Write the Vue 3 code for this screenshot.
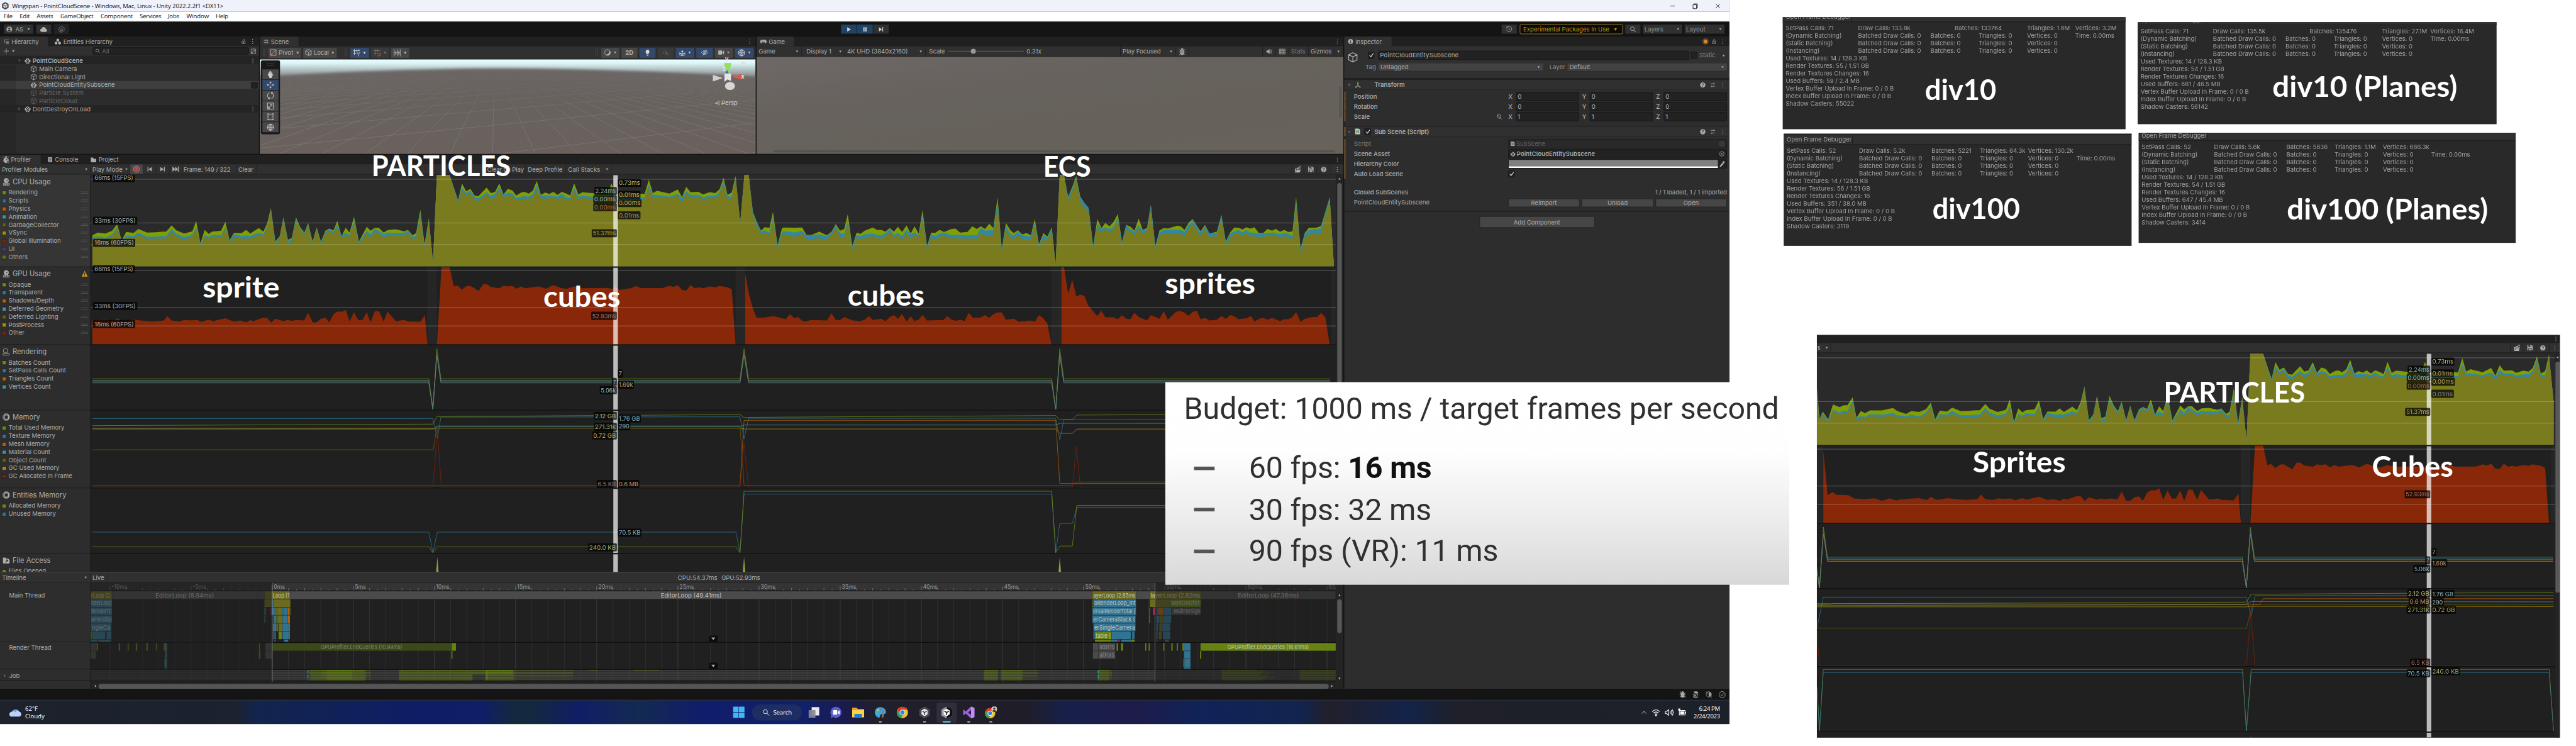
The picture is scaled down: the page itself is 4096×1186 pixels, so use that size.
<script setup>
import { h } from 'vue'

/* ---------- text fitting ---------- */
const fit = (el, { value }) => {
  const n = el.textContent.length
  if (!value || !n) return
  el.style.letterSpacing = '0px'
  el.style.letterSpacing = (value - el.offsetWidth) / n + 'px'
}
const vFit = { mounted: fit }

/* ---------- icons (16 x 16 grid) ---------- */
const S = 'fill="none" stroke="currentColor" stroke-width="1.2"'
const icons = {
  down: '<path d="M4 5h8L8 12z"/>',
  up: '<path d="M4 11h8L8 4z"/>',
  left: '<path d="M11 3v10L5 8z"/>',
  right: '<path d="M5 3v10l6-5z"/>',
  dots: '<circle cx="8" cy="3" r="1.1"/><circle cx="8" cy="8" r="1.1"/><circle cx="8" cy="13" r="1.1"/>',
  lock: `<rect x="3.5" y="7.5" width="9" height="6.5" ${S}/><path d="M6 7V4.500a2.500 2.500 0 0 1 5 0V7" ${S}/><path d="M7 10h2v2H7z"/>`,
  list: `<path d="M2 3h12M6 7h8M6 10h8M6 13.500h8M3 3v8" ${S}/>`,
  trio: '<circle cx="8" cy="4.500" r="3.300"/><circle cx="4" cy="11" r="3.300"/><circle cx="12" cy="11" r="3.300"/>',
  plus: `<path d="M8 1.500v13M1.500 8h13" ${S}/>`,
  search: `<circle cx="6.500" cy="6.500" r="4" ${S}/><path d="M9.500 9.500L14 14" ${S}/>`,
  expand: `<path d="M2 2h12v12H2zM6 10l5-5M7 5h4v4" ${S}/><path d="M2 9h5v5H2z" opacity=".6"/>`,
  cube: `<path d="M8 1.300l6 3v7.400l-6 3-6-3V4.300zM2 4.300l6 3 6-3M8 7.300v7.400" ${S}/>`,
  unity: '<path d="M7.300 1v4L5 6.300 3.500 5.400zM8.700 1v4L11 6.300l1.500-.9zM1.500 5l4.500 2.700v3L4 12 1.500 10zM14.500 5L10 7.700v3l2 1.300 2.500-2zM7.300 9.300v6L3.500 13l2.600-1.500zM8.700 9.300v6l3.800-2.300-2.600-1.500z"/><path d="M8 5.600l2 1.100-2 1.200-2-1.200z"/>',
  grid: `<path d="M5 1v14M11 1v14M1 5h14M1 11h14" ${S}/>`,
  user: `<circle cx="8" cy="8" r="7"/><circle cx="8" cy="6" r="2.400" fill="#303030"/><path d="M3.500 12c1-3 8-3 9 0a7 7 0 0 1-9 0z" fill="#303030"/>`,
  cloud: '<path d="M4 13.500a3.400 3.400 0 0 1-.4-6.700 4.500 4.500 0 0 1 8.700.6 3.100 3.100 0 0 1-.3 6.100z"/>',
  vcs: `<path d="M8 1.500l5.500 3v6L10 12.500V8a2 2 0 1 0-4 0v6.500L2.500 11V4.500z" ${S}/><path d="M8 8v7" ${S}/>`,
  history: `<path d="M3 4a6 6 0 1 1-1 5M2.500 1.500V5H6M8 4.500V8.500l2.500 1.500" ${S}/>`,
  play: '<path d="M4 2.500l9 5.500-9 5.500z"/>',
  pause: '<path d="M4 2.500h3v11H4zM9 2.500h3v11H9z"/>',
  step: '<path d="M3 2.500l7 5.500-7 5.500zM11 2.500h2v11h-2z"/>',
  prev: '<path d="M3 2.500h2.200v11H3zM13.500 2.500v11L6 8z"/>',
  next: '<path d="M11 2.500h2.200v11H11zM2.500 2.500v11L10 8z"/>',
  last: '<path d="M12.500 2.500h2v11h-2zM1 2.500v11L7 8zM7 2.500v11L12.500 8z"/>',
  record: '<circle cx="8" cy="8" r="6.700" fill="none" stroke="#aaa" stroke-width="1.100"/><circle cx="8" cy="8" r="4.600" fill="#d8403c"/>',
  orange: '<circle cx="8" cy="8" r="6.300" fill="none" stroke="#999" stroke-width="1.300"/><circle cx="8" cy="8" r="4" fill="#f08c1c"/>',
  pivot: `<path d="M2 2h12v12H2zM3 13L13 3" ${S}/><circle cx="4" cy="12.500" r="2.500" fill="none" stroke="#e0553a" stroke-width="1.300"/>`,
  local: `<path d="M8 1.300l6 3v7l-6 3-6-3v-7zM2 4.300l6 3 6-3M8 7.300v7" ${S}/><circle cx="12" cy="12" r="2.500" fill="none" stroke="#e0553a" stroke-width="1.300"/>`,
  gridy: `<path d="M4 1v11M9 1v5M1 4h14M1 9h7M13 1v3" ${S}/><path d="M9 7l3 4 2.500-4M12 11v4" ${S} />`,
  snap: `<path d="M4 1v12M9 1v6M1 4h14M1 9h7" ${S}/><path d="M9 9h3a2 2 0 0 1 0 5H9" fill="none" stroke="#b5482f" stroke-width="2"/>`,
  ruler: `<path d="M2 1v14M5 4v8M8 1v14M11 4v8M14 1v14M2 8h12" ${S}/>`,
  shade: `<circle cx="8" cy="8" r="6" ${S}/><path d="M12 3.500A6 6 0 0 1 4 12.600 8 8 0 0 0 12 3.500z"/>`,
  bulb: '<path d="M8 1a4.500 4.500 0 0 0-2.500 8.200V11h5V9.200A4.500 4.500 0 0 0 8 1zM6 12h4v2.500H6z"/>',
  mute: `<path d="M3 6v5M6 3v10M9 5v6" ${S}/><path d="M10 10l4 4M14 10l-4 4" ${S}/>`,
  fx: '<path d="M8 1l1.300 3L12 5l-2.700 1L8 9 6.700 6 4 5l2.700-1zM1 7l7 3 7-3v2l-7 3.500L1 9zM1 11l7 3 7-3v1.500L8 16l-7-3.500z"/>',
  eye: `<path d="M1.500 8c3-5 10-5 13 0-3 5-10 5-13 0zM13 2L4 14" ${S}/><circle cx="8" cy="8" r="2" ${S}/>`,
  camera: '<path d="M1 3h9v10H1zM11 6l4-3v10l-4-3z"/>',
  globe: `<circle cx="8" cy="8" r="6.300" ${S}/><path d="M8 1.700v12.600M1.700 8h12.600M8 1.700c-4 3-4 9.600 0 12.600M8 1.700c4 3 4 9.600 0 12.600" ${S}/>`,
  hand: '<path d="M4 8V4.500q.7-1 1.400 0V7l.3-4.800q.7-1 1.400 0L7.500 7l.4-5.500q.8-1 1.500 0V7l.7-4q.8-.8 1.400.1L11 8.500l1.500-1.300q1 0 .9.800L11 12.500 10 15H6l-.7-2.500L2.500 8.500q.2-1 1-.8z"/>',
  move: `<path d="M8 6V2M8 10v4M6 8H2M10 8h4" ${S}/><path d="M5.500 3.500L8 .8l2.500 2.700zM5.500 12.500L8 15.200l2.500-2.700zM3.500 5.500L.8 8l2.700 2.500zM12.500 5.500L15.200 8l-2.700 2.500z"/>`,
  rotate: `<path d="M6 2a6.500 6.500 0 0 0 0 12M10 14a6.500 6.500 0 0 0 0-12M3 14h3.500v-3M13 2H9.500v3" ${S}/>`,
  rect: `<path d="M5 3h6M5 13h6M3 5v6M13 5v6" ${S}/><path d="M2 1.500h2.500V4H2zM11.500 1.500H14V4h-2.500zM2 12h2.500v2.500H2zM11.500 12H14v2.500h-2.500z"/>`,
  pad: '<path d="M4 4h8a4 4 0 0 1 3.500 6q-1 3.500-3.500 1.500L10.500 10h-5L4 11.500Q1.500 13.500.5 10A4 4 0 0 1 4 4z"/><path d="M3.500 7.500h3M5 6v3M10 8.500h1M12 6.500h1" stroke="#2f2f2f" fill="none"/>',
  info: '<circle cx="8" cy="8" r="7"/><path d="M7 3.500h2v2H7zM6 7h3v5H7V8H6z" fill="#2a2a2a"/>',
  help: '<circle cx="8" cy="8" r="7"/><path d="M5.700 6.300Q6 4 8 4t2.300 2Q10.300 7.500 8 8.300V10M8 11.200V13" fill="none" stroke="#2a2a2a" stroke-width="1.500"/>',
  sliders: `<path d="M2 4.500h12M2 11.500h12M10.500 2v5M5.500 9v5" ${S}/>`,
  bug: '<path d="M5 4a3 3 0 0 1 6 0zM4 5.500h8v6a4 4 0 0 1-8 0z"/><path d="M1.500 3l3 3.500M14.500 3l-3 3.500M1 9h14M1.500 15l3-3M14.500 15l-3-3" fill="none" stroke="currentColor"/><path d="M6 8h4M6 11h4" stroke="#2a2a2a"/>',
  sound: `<path d="M1.500 5.500H5l4-4v13l-4-4H1.500z"/><path d="M11 5q2 3 0 6M13 3q3 5 0 10" ${S}/>`,
  keys: `<path d="M1 2h14v12H1zM1 6h14M1 10h14M4.500 2v8M8 2v8M11.500 2v8M5 10v4M11 10v4" ${S}/>`,
  folderup: '<path d="M1 6h4l1-2h3v2h5l-2 9H1z"/><path d="M8 5q1-3 5-3M11 0l3 2-2.500 2.500" fill="none" stroke="currentColor" stroke-width="1.200"/><path d="M3 13l1.500-5H13" fill="none" stroke="#2b2b2b"/>',
  save: '<path d="M1.500 1.500H12l2.500 2.500v10.500h-13z"/><path d="M4 1.500h7V6H4zM4 9h8v5.500H4z" fill="#2b2b2b"/><path d="M8 2h2v3H8zM5.500 10.500h5v4h-5z"/>',
  watch: '<circle cx="8" cy="9" r="6"/><path d="M6 0h4v2.500H6zM2 2l2 2M14 2l-2 2" stroke="currentColor"/><path d="M8 9l3-3.500" stroke="#2b2b2b" stroke-width="1.500"/><circle cx="12.500" cy="12.500" r="2.600" fill="#2b2b2b" stroke="#aaa"/>',
  doc: '<path d="M2 1h12v14H2z"/><path d="M4.500 4h7M4.500 7h7M4.500 10h7M4.500 13h4" stroke="#222"/>',
  folder: '<path d="M1 2h6l1.500 3H15v9.500H1z"/>',
  cpu: '<circle cx="8" cy="5.500" r="5.200"/><path d="M8 7l2.800-3.500" stroke="#333" stroke-width="1.400"/><path d="M1 11h14v5H1z" opacity=".85"/><path d="M2.500 13.500h2.500M6.800 13.500h2.500M11 13.500h2.500" stroke="#333" stroke-width="1.200"/>',
  rend: `<circle cx="6.500" cy="6" r="4.800" ${S}/><path d="M1 13.500q0-3.500 4-2.500l4 .5h5v3.500H1z" ${S}/>`,
  chip: '<path d="M3.500 3.500h9v9h-9z" fill="none" stroke="currentColor" stroke-width="2.200"/><path d="M5.500 0v3M8 0v3M10.500 0v3M5.500 13v3M8 13v3M10.500 13v3M0 5.500h3M0 8h3M0 10.500h3M13 5.500h3M13 8h3M13 10.500h3" fill="none" stroke="currentColor" stroke-width="1.200"/>',
  file: '<path d="M1 2h5l1.500 2H13v1l2 2v7.500H1z"/><path d="M6 12l5-5M7.500 7H11v3.500" stroke="#2d2d2d" fill="none" stroke-width="1.400"/>',
  warn: '<path d="M8 .8L15.500 15H.5z" fill="#d29a0b"/><path d="M7.200 5h1.600v5.500H7.200zM7.200 12h1.600v1.600H7.200z" fill="#222"/>',
  check: '<path d="M3 8l3.500 4L13 3" fill="none" stroke="currentColor" stroke-width="1.900"/>',
  target: `<circle cx="8" cy="8" r="6" ${S}/><circle cx="8" cy="8" r="1.800"/>`,
  axes: '<path d="M8 9V1" stroke="#8cc63a" stroke-width="2.200"/><path d="M7.500 9.500L2 14" stroke="#4aa3d8" stroke-width="2.600"/><path d="M8.500 9.500L14 14" stroke="#e0603a" stroke-width="2.600"/>',
  script: '<path d="M2 1h9l3 3v11H2z" fill="#c9c9c9"/><path d="M6.500 4l-.8 8M10 4l-.8 8M4.500 6.500h7M4.300 9.500h7" stroke="#2b7a3b" fill="none" stroke-width="1.100"/>',
  picker: '<path d="M10 1.500q2-1.500 3.500 0t0 3.500L12 6.500 9 4zM8.500 4.500l3 3L5 14l-3 1 .8-3z"/>',
  unlink: `<path d="M3 4q5-4 8 0v6q-3 4-7 0zM2 2l12 12" ${S}/>`,
  okc: `<circle cx="8" cy="8" r="6.500" ${S}/><path d="M5 8l2.200 2.500L11 5.500" ${S}/>`,
  db: '<path d="M2.500 3c0-2.500 11-2.500 11 0v2c0 2-11 2-11 0zM2.500 7c2 2 9 2 11 0v2.500c0 2-11 2-11 0zM2.500 11.500c2 2 9 2 11 0V14c-2 2-9 2-11 0z"/><path d="M1 1l14 14" stroke="#151515" stroke-width="1.500"/>',
  bugoff: '<path d="M5 4a3 3 0 0 1 6 0v1l1 1v5.500a4 4 0 0 1-8 0V6z"/><path d="M1.500 4l3 2.500M14.500 4l-3 2.500M1 9h14M1.500 14l3-2M14.500 14l-3-2M1.500 1l13 14" fill="none" stroke="currentColor" stroke-width="1.200"/>',
  timeoff: `<circle cx="8" cy="8" r="6" ${S}/><path d="M8 3a5 5 0 0 1 0 10z"/><path d="M1 1l14 14" ${S}/>`,
  caret: `<path d="M3 10.500l5-5 5 5" ${S}/>`,
  wifi: `<path d="M1 6.500q7-6.500 14 0M3.300 9q4.700-4 9.400 0M5.600 11.400q2.400-2 4.800 0" ${S} /><circle cx="8" cy="13.300" r="1.300"/>`,
  vol: `<path d="M1.500 6H4l3-3v10L4 10H1.500zM9.500 5.500q1.500 2.500 0 5M11.500 4q2.500 4 0 8M13.500 2.500q3.500 5.500 0 11" ${S}/>`,
  batt: `<path d="M3 4.500h10v8H3z" ${S}/><path d="M4.500 6h7v5h-7zM13.500 7h1.500v3h-1.500zM1 1h4L4 4.500H1z"/>`,
  win: '<path d="M0 0h7.700v7.700H0zM8.300 0H16v7.700H8.300zM0 8.300h7.700V16H0zM8.300 8.300H16V16H8.300z" fill="#3fb9f2"/>',
  tasks: '<path d="M5 1h10v11H5z" fill="#e9e9ee"/><path d="M1 5h9v10H1z" fill="#858992" opacity=".92"/>',
  chat: '<path d="M8 .5a7.300 7.300 0 1 1-3.800 13.600L1 15.500l.6-4A7.300 7.300 0 0 1 8 .5z" fill="#5d60c4"/><path d="M4 5h5.500v6H4zM10.300 7l2.500-1.800v5.600L10.300 9z" fill="#fff"/>',
  explorer: '<path d="M0 1.500h6l1.500 2H16V14H0z" fill="#e6a817"/><path d="M0 5h16v9.500H0z" fill="#ffd04a"/><path d="M3 14.500V10h10v4.500z" fill="#1f82d1"/>',
  paint: '<path d="M8 1C3 1 0 5 1 9.500 2 14 6 16 7.500 14c1-1.500-.5-3 1.500-3.500 3-.5 6.500.5 6.500-3S12.500 1 8 1z" fill="#35a7e0"/><circle cx="5" cy="5" r="1.300" fill="#f2c230"/><circle cx="9" cy="4" r="1.300" fill="#e34b3c"/><circle cx="4" cy="9" r="1.300" fill="#6fc04a"/><path d="M12 3l2 .5-2 11-2 .5z" fill="#b5763a"/>',
  chrome: '<circle cx="8" cy="8" r="7.500" fill="#f2c21a"/><path d="M8 .5a7.500 7.500 0 0 1 6.500 3.800H8L4.800 10 1.500 4.300A7.500 7.500 0 0 1 8 .5z" fill="#e2382c"/><path d="M1.500 4.300L5 10.200l3.500 1.500-2.300 3.600A7.500 7.500 0 0 1 1.500 4.300z" fill="#2fa24f"/><circle cx="8" cy="8" r="3.700" fill="#fff"/><circle cx="8" cy="8" r="2.900" fill="#3a7de8"/>',
  chrome2: '<circle cx="7" cy="9" r="6.800" fill="#f2c21a"/><path d="M7 2.200a6.800 6.800 0 0 1 6 3.500H7L4 11 1.100 5.700A6.800 6.800 0 0 1 7 2.200z" fill="#e2382c"/><path d="M1.100 5.700L4.300 11l3 1.500-2 3.200A6.800 6.800 0 0 1 1.100 5.700z" fill="#2fa24f"/><circle cx="7" cy="9" r="3.400" fill="#fff"/><circle cx="7" cy="9" r="2.600" fill="#3a7de8"/><circle cx="12.500" cy="3.500" r="4" fill="#cfc7b8"/><circle cx="12.500" cy="2.800" r="1.500" fill="#5b3a2a"/><path d="M9.500 6.200q3-3 6 0-3 2.500-6 0z" fill="#2b3b2f"/>',
  hub: '<path d="M8 0l7 4v8l-7 4-7-4V4z" fill="#d8d8d8"/><path d="M8 3l4 2.300v5L8 13l-4-2.700v-5z" fill="#222"/><path d="M8 8L5 6.200M8 8l3-1.800M8 8v3.500" stroke="#eee" fill="none"/>',
  app: '<path d="M8 0l7 4v8l-7 4-7-4V4z" fill="#4a4a4e"/><path d="M8 3l4 2.300v5L8 13l-4-2.700v-5z" fill="#e8e8ee"/><path d="M8 8L5 6.200M8 8l3-1.800M8 8v3.500" stroke="#222" fill="none"/>',
  editor: '<path d="M8 0l7 4v8l-7 4z" fill="#111"/><path d="M8 0L1 4v8l7 4z" fill="#9a9a9a"/><path d="M8 3l4 2.300v5L8 13l-4-2.700v-5z" fill="#fff"/><path d="M8 8L5 6.200M8 8l3-1.800M8 8v3.500" stroke="#222" stroke-width="1.400" fill="none"/>',
  vs: '<path d="M11 0l4.500 2v12L11 16 4 9.500 1.500 11.500.5 11V5l1-.5L4 6.500zM11 5L7 8l4 3z" fill="#9b5fd8"/><path d="M11 0l4.500 2v12L11 16z" fill="#c08cf0"/>',
  weather: '<path d="M4 14a3.500 3.500 0 0 1-.3-7A5 5 0 0 1 13 7a3.600 3.600 0 0 1-.5 7z" fill="#b9d3fa"/><path d="M4.500 6A5 5 0 0 1 12 5q-3 0-4 3-2-2-3.500-2z" fill="#6f9fe6"/>',
  min: `<path d="M3 8h10" ${S}/>`,
  max: `<path d="M3 5h8v9H3zM5 5V3h8v9h-2" ${S}/>`,
  close: `<path d="M3 3l10 10M13 3L3 13" ${S}/>`
}
const Ico = (p) =>
  h('svg', {
    viewBox: '0 0 16 16', width: p.s || 14, height: p.t || p.s || 14,
    preserveAspectRatio: 'none', fill: 'currentColor', innerHTML: icons[p.n], style: { flex: 'none', display: 'block' }
  })
Ico.props = ['n', 's', 't']

/* ---------- legends ---------- */
const C = ['#6c8a0c', '#2b7391', '#b35d02', '#43919a', '#655c0d', '#a88c06', '#7f2108', '#4c3872', '#686a20']
const modules = [
  { name: 'CPU Usage', icon: 'cpu', h: 184, on: true, drag: true, items: ['Rendering', 'Scripts', 'Physics', 'Animation', 'GarbageCollector', 'VSync', 'Global Illumination', 'UI', 'Others'] },
  { name: 'GPU Usage', icon: 'cpu', h: 155, drag: true, warn: true, items: ['Opaque', 'Transparent', 'Shadows/Depth', 'Deferred Geometry', 'Deferred Lighting', 'PostProcess', 'Other'] },
  { name: 'Rendering', icon: 'rend', h: 130, items: ['Batches Count', 'SetPass Calls Count', 'Triangles Count', 'Vertices Count'] },
  { name: 'Memory', icon: 'chip', h: 155, items: ['Total Used Memory', 'Texture Memory', 'Mesh Memory', 'Material Count', 'Object Count', 'GC Used Memory', 'GC Allocated In Frame'] },
  { name: 'Entities Memory', icon: 'chip', h: 130, items: ['Allocated Memory', 'Unused Memory'] },
  { name: 'File Access', icon: 'file', h: 37, items: ['Files Opened'] }
]

/* ---------- frame samples: x, rendering, scripts, others ---------- */
const A = `412,470,484,495 435,455,475,485 470,460,485,492 500,445,465,475 522,408,425,435 542,500,505,512 562,452,472,485 595,457,475,485 617,435,455,470 655,455,478,490 695,453,477,488 725,450,475,488 740,450,475,488 765,415,435,450 785,442,462,475 820,460,480,495 857,448,468,478 874,390,425,435 893,515,520,528 912,440,470,480 930,462,480,490 945,450,468,478 985,445,470,480 1004,395,425,435 1023,498,503,510 1042,457,465,482 1077,458,475,488 1097,440,472,488 1115,460,475,488 1153,430,455,470 1173,450,465,475 1190,405,420,430 1207,318,322,330 1227,505,512,525 1246,475,480,490 1263,370,372,378 1283,495,502,518 1300,485,492,508 1319,370,380,390 1338,425,432,440 1356,455,460,472 1373,402,410,420 1393,505,510,520 1411,425,428,432 1430,505,508,518 1450,445,450,462 1468,432,435,445 1486,443,450,460 1503,390,410,425 1522,475,475,485 1540,428,455,472 1558,455,470,480`
const B = `6,367,385,400 20,505,510,522 42,423,445,458 53,445,465,482 65,428,432,450 76,428,445,458 90,455,465,482 102,440,455,468 124,437,457,472 148,448,457,472 159,440,445,458 172,470,478,490 182,458,475,488 194,328,350,370 206,520,525,545 218,376,384,392 230,620,620,622 241,134,134,134 277,134,134,134 301,275,278,292 312,182,205,220 324,225,235,248 336,212,222,235 348,248,255,272 359,252,265,278 382,205,230,240 394,235,252,270 406,228,240,255 418,182,200,215 430,242,245,260 442,212,232,245 455,220,238,250 466,248,262,275 480,232,255,268 490,228,252,265 501,238,255,270 513,222,242,258 524,168,190,215 536,245,250,265 548,232,250,265 560,240,250,265 571,228,250,258 583,245,255,272 595,228,240,255 607,237,258,272 619,248,262,272 630,180,205,220 642,242,255,270 654,230,250,262 680,235,255,268 724,242,262,270 736,182,210,240 750,240,262,272 790,236,258,268 830,240,260,270 842,160,190,205 853,235,245,262 865,222,245,255 900,238,255,265 924,215,240,250 936,258,262,285 948,200,225,240 960,230,245,258 983,228,245,255 995,242,258,272 1015,230,250,262 1030,235,250,265 1042,215,230,245 1054,150,165,180 1065,245,252,268 1077,232,255,265 1088,140,150,155 1101,400,400,402 1113,134,134,134 1125,134,134,134 1137,340,345,360 1148,395,398,420 1160,445,450,465 1170,425,443,455 1184,428,455,470 1194,340,370,385 1207,525,530,550 1220,428,450,465 1230,427,448,465 1255,428,455,480 1277,427,446,462 1289,468,470,490 1303,468,470,492 1325,450,465,487 1347,470,475,495 1360,450,452,465 1372,408,415,430 1384,445,460,482 1396,435,462,482 1406,352,385,400 1419,530,535,555 1431,455,470,485 1442,462,475,492 1454,445,465,485 1477,427,460,475 1489,440,468,485 1501,440,470,488 1513,450,460,475 1525,430,435,450 1537,450,468,482 1548,423,458,470 1560,452,475,495`
const D = `5,415,440,455 18,460,465,490 30,420,455,468 43,460,470,480 55,330,360,380 69,530,535,552 82,455,465,482 94,457,475,495 108,440,460,478 122,452,455,472 145,435,470,488 158,433,468,486 172,455,468,488 195,452,470,488 210,420,468,488 224,435,470,490 237,420,430,455 250,435,445,475 263,405,442,468 276,430,440,465 289,258,280,310 302,545,550,568 315,402,420,440 330,445,465,482 340,458,470,492 352,442,450,468 366,465,470,492 380,458,475,495 393,470,475,497 405,380,400,415 418,520,528,545 432,458,468,485 444,478,485,505 458,425,430,445 470,635,635,635 483,134,134,134 496,134,134,134 509,255,255,275 522,200,210,230 534,140,145,150 547,255,258,285 560,290,292,318 573,318,320,342 587,530,535,550 600,380,405,420 613,430,435,455 625,402,425,435 638,420,435,450 650,398,425,438 664,352,370,385 677,508,512,528 690,412,415,435 703,422,435,450 716,445,450,468 729,377,415,430 742,440,445,462 755,430,435,445 767,300,305,330 781,530,535,552 794,443,455,470 807,430,440,460 820,432,440,465 850,417,440,460 860,420,440,462 872,440,450,475 885,400,412,435 897,380,385,405 922,448,455,475 936,412,420,435 950,460,460,482 973,450,455,472 987,357,358,375 1001,505,515,530 1014,455,460,485 1027,427,450,465 1040,428,440,460 1053,438,455,472 1065,425,440,455 1077,433,455,475 1090,425,455,475 1104,458,462,480 1117,458,460,478 1131,435,458,472 1145,445,455,472 1157,435,458,472 1170,450,465,482 1183,440,455,475 1196,452,462,480 1209,448,475,495 1220,255,280,305 1234,545,555,575 1247,458,465,485 1260,428,440,465 1275,428,435,462 1285,427,438,460 1298,418,430,455 1325,258,262,275 1338,640,640,642`
const E = `15,230,262,265 20,350,352,360 27,322,328,335 38,352,358,364 48,295,314,320 62,305,326,334 70,298,318,326 78,298,322,330 89,268,278,288 97,345,346,355 106,320,340,348 115,328,342,348 125,318,332,340 150,318,334,342 173,308,328,335 182,320,336,343`
const seg = (s, ox, sx, sy, oy) => s.trim().split(' ').map((p) => {
  const [x, ...ys] = p.split(',').map(Number)
  return [+(ox + x / sx).toFixed(1), ...ys.map((y) => +(oy + y / sy).toFixed(1))]
})
const cpu = [...seg(A, 0, 2.24, 2.8, 300), ...seg(B, 700, 1.4255, 2.8, 300), ...seg(D, 1800, 1.568, 2.8, 300)]
const cpu2 = [...seg(E, -7.6, 1.0453, 1.912, 295), ...cpu.filter((p) => p[0] < 1473)]
const area = (d, k, base) => `M${d[0][0]},${base}L${d.map((p) => p[0] + ',' + p[k]).join(' ')}L${d[d.length - 1][0]},${base}Z`

const GA = `412,945 440,942 470,940 505,950 523,932 545,950 600,940 640,946 680,950 730,945 745,920 765,945 800,950 820,942 850,944 880,942 895,952 930,940 950,948 1004,932 1040,950 1070,945 1097,955 1115,942 1130,948 1170,930 1190,930 1208,955 1227,935 1263,948 1280,942 1300,946 1320,942 1355,945 1373,902 1393,955 1410,955 1430,935 1450,930 1467,955 1486,910 1503,896 1525,896 1540,885 1558,950`
const GB = `6,898 18,942 30,942 42,898 53,955 65,893 77,893 90,950 101,895 124,948 148,942 160,950 194,952 207,915 214,1078 241,1078 254,647 277,647 289,755 300,750 312,773 325,753 336,752 360,780 372,742 382,742 394,758 418,765 430,752 440,755 455,752 466,768 480,755 490,765 530,755 550,768 571,748 595,765 610,768 630,755 650,765 720,763 740,768 747,755 760,775 790,765 805,753 820,764 880,764 900,752 912,758 924,748 936,775 948,778 960,748 972,765 985,760 995,765 1015,755 1030,760 1042,752 1065,760 1077,770 1088,1078`
const GC = `1115,1078 1115,680 1125,790 1137,880 1148,930 1170,928 1195,920 1230,938 1242,910 1254,932 1265,925 1278,948 1289,950 1300,942 1347,945 1360,905 1372,942 1384,942 1396,925 1420,945 1442,948 1454,940 1466,920 1477,942 1501,935 1513,948 1525,925 1537,915 1548,935 1560,910`
const GD = `5,950 18,922 30,947 43,940 55,913 69,945 120,942 132,920 145,940 160,946 172,940 186,948 199,902 212,930 235,928 250,915 263,930 276,910 289,900 302,900 315,940 340,935 355,952 390,945 405,952 418,915 430,930 444,960 457,1078 488,1078 488,647 496,647 509,795 522,720 535,812 547,800 560,808 573,865 600,920 613,890 625,927 650,927 664,938 677,915 690,935 703,938 716,902 729,925 755,945 767,915 794,935 807,892 820,940 845,897 857,890 870,900 885,918 897,897 910,890 922,938 936,930 950,945 973,940 987,920 1001,935 1014,915 1027,920 1040,938 1065,932 1079,920 1091,950 1104,936 1117,930 1131,940 1145,930 1170,948 1183,938 1196,938 1209,925 1220,898 1234,952 1247,936 1270,925 1285,925 1298,903 1311,925 1325,1078`
const GE = `28,746 28,470 37,640 47,628 55,638 80,640 92,653 115,655 135,652 150,662 165,652 180,660 188,656`
const gpuHead = [...seg(GA, 0, 2.24, 2.8, 300), ...seg(GB, 700, 1.4255, 2.8, 300)]
const gpu = [...gpuHead, ...seg(GC, 700, 1.4255, 2.8, 300), ...seg(GD, 1800, 1.568, 2.8, 300)]
const gpu2 = [...seg(GE, -7.6, 1.0453, 1.912, 295), ...gpuHead]

const pulse = (y, evs, x0, x1, end) => {
  let s = `M${x0},${y}`
  for (const [x, dip] of evs) s += dip ? `L${x - 8},${y} ${x},814 ${x + 8},${693 + (y - 753) * 1.6} ${x + 16},${y}` : `L${x},${y} ${x + 8},${693 + (y - 753) * 1.6} ${x + 17},${y}`
  return s + `L${x1},${y}` + (end ? `L${x1},814` : '')
}
const rendLines = [[753.3, C[0]], [756.2, C[1]], [758, C[2]], [759.3, '#6d4a12'], [761.5, C[3]]]
const evMain = [[861, 1], [1472, 0], [2100, 1]]
const memMain = [
  [C[1], '184,832.500 861,832.500 870,871 877,829.500 1472,829 1480,873 1489,832 2100,832 2108,875 2116,834.500 2657,834'],
  [C[0], '184,846.500 861,843.500 869,828.500 1180,826.500 1472,824.500 1480,830.700 1489,830 2100,826.500 2108,834.500 2133,834.500 2142,825.500 2657,823'],
  [C[2], '184,966.500 1472,966.500 1480,836 2100,836 2108,961.500 2657,961.500'],
  [C[4], '184,894.500 862,894.500 869,847 1472,847 1480,965.500 2132,965.500 2140,958.500 2657,958.500'],
  [C[3], '184,853.300 862,853.300 869,848.500 1472,848.500 1480,845.300 2100,845.300 2108,841.800 2657,842.200'],
  [C[5], '184,851.700 861,852 869,851.500 1472,851.500 1480,853.200 2100,853.200 2108,861.700 2133,861.700 2142,853.300 2657,853.300'],
  [C[6], '184,969.300 861,969.300 870,855 878,969.300 1472,969.300 1480,882 1489,969.300 2133,969.300 2141,888 2149,969.300 2657,969.300'],
  [C[1], '184,1058.300 853,1058.300 861,1099 870,1058.300 1464,1058.300 1472,1099 1480,982.700 2092,982.700 2100,1099 2108,1041 2133,1041 2142,1009 2657,1009'],
  [C[0], '184,1087.500 853,1087.500 861,1099 870,1087.500 1464,1087.500 1472,1099 1480,977 2092,977 2100,1099 2108,1086 2133,1086 2142,1005.300 2657,1005.300']
]
const z12 = (s) => seg(s, -7.6, 1.0453, 1.912, 295).map((p) => p.join(',')).join(' ')
const mem2 = [
  [C[1], z12('15,1145 28,1028 908,1028 918,1102 926,1022 1547,1022')],
  [C[0], z12('15,1058 40,1056 50,1053 908,1047 918,1017 1547,1010')],
  [C[2], z12('15,1060 935,1057 943,1034 1547,1034')],
  [C[4], z12('15,1146 908,1146 920,1062 926,1055 1547,1055')],
  [C[3], z12('15,1053 908,1055 918,1045 1547,1046')],
  [C[5], z12('15,1065 908,1065 918,1063 1547,1064')],
  [C[6], z12('15,1160 20,1290 908,1290 917,1090 926,1290 1547,1290')],
  [C[0], z12('15,1370 20,1536 28,1303 900,1303 908,1536 918,1303 1538,1303 1547,1538')],
  [C[1], z12('15,1380 20,1536 28,1315 900,1315 908,1536 918,1315 1538,1315 1547,1538')]
]
const bands = [[347, 530], [531, 685], [686, 815], [816, 970], [971, 1100], [1101, 1138]]
const base = [
  ['r', '0.73ms', 364, '#b3bb7a', 46], ['l', '2.24ms', 380, '#86aebc', 45], ['r', '0.01ms', 387.5, '#c2936c', 45], ['l', '0.00ms', 396, '#9ab8bb', 47],
  ['r', '0.00ms', 404, '#b9a861', 47], ['l', '0.00ms', 412, '#a26c5c', 47], ['r', '0.01ms', 428, '#8c86a0', 45], ['l', '51.37ms', 464, '#a3a468', 50],
  ['l', '52.93ms', 628, '#b17a68', 51], ['r', '7', 743, '#b3bb7a', 10], ['l', '7', 759.6, '#86aebc', 10], ['r', '1.69k', 765, '#c2936c', 32], ['l', '5.06k', 776, '#8fb9bd', 34]
]
const tagsMain = [...base,
  ['l', '2.12 GB', 827, '#b3bb7a', 46], ['r', '1.76 GB', 832, '#86aebc', 46], ['r', '290', 848, '#8fb9bd', 25], ['l', '271.31k', 849, '#a3a468', 46],
  ['l', '0.72 GB', 866, '#c0ab5a', 49], ['l', '6.5 KB', 962.5, '#a9705f', 40], ['r', '0.6 MB', 962.5, '#c2936c', 43], ['r', '70.5 KB', 1059.5, '#86aebc', 47], ['l', '240.0 KB', 1088.5, '#a3ac68', 57]]
const tags2 = [...base,
  ['l', '2.12 GB', 825, '#b3bb7a', 46], ['r', '1.76 GB', 826, '#86aebc', 46], ['l', '0.6 MB', 841.5, '#c2936c', 43], ['r', '290', 842.5, '#8fb9bd', 25], ['l', '271.31k', 857.5, '#a3a468', 47],
  ['r', '0.72 GB', 858, '#c0ab5a', 49], ['l', '6.5 KB', 963, '#a9705f', 40], ['r', '240.0 KB', 980, '#a3ac68', 57], ['l', '70.5 KB', 984, '#86aebc', 47]]
const levels = [['66ms (15FPS)', 354, 356.5], ['33ms (30FPS)', 439, 443.4], ['16ms (60FPS)', 483, 486.5], ['66ms (15FPS)', 535, 538.2], ['33ms (30FPS)', 608.5, 611.6], ['16ms (60FPS)', 644.5, 648.2]]

const charts = {
  main: { x0: 180, x1: 2657, y1: 1138, cpu, gpu, lines: memMain, tags: tagsMain, ev: evMain, rx0: 184, rx1: 2646, gaps: [[850, 869], [1463, 1482], [2091, 2111], [2648, 2657]], spikes: [870, 1480, 2108] },
  side: { x0: 6.4, x1: 1476, y1: 1112, cpu: cpu2, gpu: gpu2, lines: mem2, tags: tags2, ev: [[11.5, 1], [861, 1]], rx0: 7, rx1: 1472, gaps: [[6, 19], [850, 869], [1467, 1476]], spikes: [870] }
}
/* a frame chart drawn in profiler coordinates */
const Chart = ({ d, labels }) => {
  const k = []
  const el = (t, a, c) => k.push(h(t, a, c))
  const W = d.x1 - d.x0
  el('rect', { x: d.x0, y: 347, width: W, height: 184, fill: '#2a2a2a' })
  el('rect', { x: d.x0, y: 531, width: W, height: d.y1 - 531, fill: '#202020' })
  d.gaps.forEach(([a, b]) => el('rect', { x: a, y: 531, width: b - a, height: 154, fill: '#262626' }))
  ;[[1, '#7f9f05'], [2, '#3287a5'], [3, '#7a7b1f']].forEach(([i, c]) => el('path', { d: area(d.cpu, i, 530), fill: c }))
  el('path', { d: area(d.gpu, 1, 685), fill: '#882808' })
  levels.forEach((l) => el('path', { d: `M${d.x0},${l[2]}H${d.x1}`, stroke: '#fff', 'stroke-opacity': 0.3, 'stroke-width': 1.1 }))
  rendLines.forEach(([y, c]) => el('path', { d: pulse(y, d.ev, d.rx0, d.rx1, false), fill: 'none', stroke: c, 'stroke-width': 1 }))
  d.lines.forEach(([c, p]) => el('polyline', { points: p, fill: 'none', stroke: c, 'stroke-width': 1.1, opacity: 0.9 }))
  d.spikes.forEach((x) => d.y1 > 1107 && el('path', { d: `M${x - 2.5},1138L${x},1108L${x + 2.5},1138Z`, fill: '#9a9a45' }))
  bands.forEach(([a, b]) => a < d.y1 && el('rect', { x: 1220, y: a + 1.5, width: 9, height: Math.min(b, d.y1) - a - 1.5, fill: '#fff', 'fill-opacity': 0.7 }))
  bands.slice(0, 5).forEach(([, b]) => el('rect', { x: d.x0, y: b, width: W, height: 1.2, fill: '#0e0e0e' }))
  if (labels) levels.forEach(([t, y], i) => {
    const w = [83, 88, 84][i % 3]
    el('rect', { x: 185, y: Math.max(y - 8, 347), width: w, height: Math.min(16, y + 8 - 347), rx: 2, fill: '#000', 'fill-opacity': 0.72 })
    el('text', { x: 188, y: y + 4.2, fill: '#b0b0b0', 'font-size': 12, textLength: w - 6 }, t)
  })
  d.tags.forEach(([s, t, y, c, w]) => {
    const x = s === 'l' ? 1227 - w : 1229
    el('rect', { x, y: y - 8, width: w, height: 16, rx: 2, fill: '#000', 'fill-opacity': 0.72 })
    el('text', { x: x + 2, y: y + 4.4, fill: c, 'font-size': 12, textLength: w - 4, lengthAdjust: 'spacingAndGlyphs' }, t)
  })
  return h('svg', { viewBox: `${d.x0} 347 ${W} ${d.y1 - 347}`, width: W, height: d.y1 - 347, style: { display: 'block', fontFamily: 'Inter, sans-serif' } }, k)
}
Chart.props = ['d', 'labels']

/* ---------- timeline ---------- */
const O = '#6b6a1f', U = '#317390', G = '#668312', Y = '#4a4a4a', R = '#a02050', T = '#3d8a52', X = '#b5650c'
const blocks = [
  [180, 223, 0, O, 'rLoop (2.'], [223, 512, 0, Y, 'EditorLoop (8.94ms)'], [512, 527, 0, Y], [527, 541, 0, O], [541, 577, 0, O, 'Loop (1'], [577, 2173, 0, '#4b4b4b', 'EditorLoop (49.41ms)'],
  [2173, 2260, 0, O, 'ayerLoop (2.65ms'], [2260, 2287, 0, '#4b4b4b'], [2287, 2389, 0, O, 'layerLoop (2.82ms'], [2389, 2657, 0, Y, 'EditorLoop (47.36ms)'],
  [180, 223, 1, U, 'nderLoop'], [526, 541, 1, O], [541, 544, 1, U], [544, 578, 1, O], [2173, 2175, 1, O], [2175, 2260, 1, U, 'oRenderLoop_Int'], [2287, 2328, 1, O], [2328, 2389, 1, G, 'sentOnGfxT'],
  [180, 223, 2, U, 'RenderTc'], [526, 528, 2, T], [528, 530, 2, R], [538, 541, 2, R], [541, 547, 2, U], [547, 551, 2, O], [551, 561, 2, O], [561, 565, 2, U], [565, 573, 2, U], [573, 576, 2, X], [576, 578, 2, G],
  [2173, 2260, 2, U, 'ersalRenderTotal ('], [2286, 2288, 2, O], [2293, 2298, 2, R], [2300, 2304, 2, U], [2304, 2314, 2, X], [2314, 2330, 2, U], [2330, 2389, 2, Y, '.WaitForSign'],
  [180, 223, 3, U, 'ameraSta'], [526, 528, 3, T], [544, 550, 3, U], [550, 552, 3, G], [552, 562, 3, O], [562, 573, 3, U], [573, 577, 3, X], [2173, 2259, 3, U, 'erCameraStack ('], [2286, 2288, 3, T], [2300, 2306, 3, U], [2306, 2314, 3, O], [2314, 2330, 3, U],
  [180, 222, 4, U, 'ngleCa'], [543, 550, 4, U], [550, 553, 4, G], [554, 562, 4, O], [562, 575, 4, U], [575, 577, 4, X], [2175, 2259, 4, U, 'erSingleCamera'], [2300, 2304, 4, U], [2306, 2312, 4, O], [2312, 2328, 4, U],
  [180, 184, 5, G], [184, 210, 5, U], [212, 222, 5, U], [543, 546, 5, Y], [546, 549, 5, U], [554, 561, 5, G], [562, 575, 5, U], [575, 577, 5, G], [2175, 2178, 5, U], [2178, 2211, 5, G, 'table ('], [2211, 2250, 5, U], [2252, 2257, 5, U], [2300, 2303, 5, U], [2305, 2311, 5, O], [2313, 2328, 5, U]
]
const partial = [[180, 193, U], [193, 197, R], [197, 210, U], [210, 214, G], [214, 221, U], [546, 548, U], [565, 573, U], [2178, 2211, G], [2211, 2222, U], [2222, 2228, R], [2230, 2250, U], [2250, 2257, G], [2302, 2303, U], [2317, 2325, U]]
const rblocks = [
  [180, 191, 0, Y], [192, 195, 0, G], [236, 239, 0, G], [254, 256, 0, G], [270, 273, 0, G], [291, 294, 0, G], [310, 312, 0, G], [326, 328, 0, G], [328, 332.5, 0, U], [515, 517, 0, G], [528, 541, 0, Y],
  [541, 897, 0, '#3b481a', 'GPUProfiler.EndQueries (10.99ms)'], [898, 907, 0, G], [2174, 2185, 0, Y], [2186, 2218, 0, Y, 'ndsFro'], [2221, 2224, 0, G], [2230, 2234, 0, G], [2278, 2280, 0, G], [2285, 2287, 0, G], [2314, 2316, 0, G], [2330, 2332.5, 0, G], [2341, 2343, 0, G], [2352, 2355, 0, G], [2355, 2368, 0, U],
  [2388, 2657, 0, G, 'GPUProfiler.EndQueries (16.61ms)'],
  [180, 191, 1, Y], [328, 332, 1, U], [515, 518, 1, G], [528, 541, 1, Y], [898, 900, 1, G], [2174, 2185, 1, Y], [2186, 2218, 1, Y, 'aitForS'], [2355, 2368, 1, U], [2387, 2389.5, 1, G],
  [327, 329, 2, U], [329, 331, 2, G], [331, 332.5, 2, U], [2354, 2356, 2, G], [2356, 2368, 2, U]
]
const ticks = Array.from({ length: 154 }, (_, i) => ({ x: 202.5 + i * 16.14, big: (i - 1) % 10 === 0, mid: (i - 1) % 2 === 0 }))
const msLabels = Array.from({ length: 16 }, (_, i) => ({ x: 218.7 + i * 161.4, t: (i * 5 - 10) + 'ms' }))
const jobs = Array.from({ length: 11 }, (_, i) => ({
  y: 1332.5 + i * 2,
  g: [[614 + (i % 3) * 2, i % 3 === 1 ? 724 : 700], i % 3 ? [650, 728] : [640, 738], [793 + (i % 2), 900], [900, i < 5 ? 1020 : 940], i % 3 === 0 ? [966, 1140] : [966, 1022], i === 0 ? [1170, 1188] : [966, 970], i === 0 ? [1260, 1312] : [966, 970], [1957, 1985], i % 3 ? [1992, 2034] : [1990, 2065], i % 2 ? [2186, 2212] : [2184, 2206], [2430, 2500 + (i * 17) % 40], [2585, 2657]]
}))

/* ---------- rows of controls ---------- */
const tree = [
  { t: 'PointCloudScene', root: true, b: true, i: 'unity' }, { t: 'Main Camera', i: 'cube' }, { t: 'Directional Light', i: 'cube' },
  { t: 'PointCloudEntitySubscene', i: 'unity', sel: true }, { t: 'Particle System', i: 'cube', off: true }, { t: 'ParticleCloud', i: 'cube', off: true },
  { t: 'DontDestroyOnLoad', root: true, i: 'unity', shut: true }
]
const menus = [['File', 32], ['Edit', 34], ['Assets', 47], ['GameObject', 80], ['Component', 78], ['Services', 56], ['Jobs', 37], ['Window', 58], ['Help', 40]]
const menuW = [18, 20, 33, 66, 64, 42, 23, 44, 25]
const debug = [
  { k: 'a', cut: 10, calls: 71, draw: '133.8k', bat: '133764', wide: true, tri: '1.6M', ver: '3.2M', tex: 55, buf: '59 / 2.4 MB', sh: 55022, tag: 'div10', tx: 283, tw: 142, ty: 165 },
  { k: 'b', cut: 6, calls: 71, draw: '135.5k', bat: '135476', wide: true, tri: '27.1M', ver: '16.4M', tex: 54, buf: '681 / 46.5 MB', sh: 56142, tag: 'div10 (Planes)', tx: 268, tw: 368, ty: 149 },
  { k: 'c', cut: 20, calls: 52, draw: '5.2k', bat: '5221', tri: '64.3k', ver: '130.2k', tex: 56, buf: '351 / 38.0 MB', sh: 3119, tag: 'div100', tx: 296, tw: 174, ty: 167 },
  { k: 'd', cut: 16, calls: 52, draw: '5.6k', bat: '5636', tri: '1.1M', ver: '686.3k', tex: 54, buf: '647 / 45.4 MB', sh: 3414, tag: 'div100 (Planes)', tx: 295, tw: 400, ty: 173 }
]
const tasks = [['tasks'], ['chat'], ['explorer'], ['paint', 1], ['chrome'], ['app', 1], ['editor', 2], ['vs', 1], ['chrome2', 1]]
const xyz = [['Position', '0'], ['Rotation', '0'], ['Scale', '1']]
const rays = Array.from({ length: 75 }, (_, i) => 980 + (i - 37) * 85)
const crosses = [262, 323, 230, 211, 197, 187, 179, 173, 168, 164, 161, 158, 400]
</script>

<template>
  <div class="page"><div class="board">
    <!-- Unity editor on the desktop -->
    <div class="desktop">
      <header class="title">
        <Ico n="app" s="15" /><span v-fit="420">Wingspan - PointCloudScene - Windows, Mac, Linux - Unity 2022.2.2f1 &lt;DX11&gt;</span>
        <i class="grow" /><Ico n="min" s="14" /><Ico n="max" s="14" /><Ico n="close" s="14" />
      </header>
      <nav class="menu"><span v-for="(m, i) in menus" :key="m[0]" class="mi" :style="{ width: m[1] + 'px' }"><span v-fit="menuW[i]">{{ m[0] }}</span></span></nav>
      <div class="topbar">
        <div class="btn as"><Ico n="user" s="13" />AS<Ico n="down" s="10" /></div>
        <div class="btn w30"><Ico n="cloud" s="16" /></div>
        <div class="btn w30 dim"><Ico n="vcs" s="15" /></div>
        <div class="play"><div class="btn on"><Ico n="play" s="13" /></div><div class="btn on"><Ico n="pause" s="13" /></div><div class="btn"><Ico n="step" s="13" /></div></div>
        <div class="btn w30"><Ico n="history" s="14" /></div>
        <div class="exp"><span v-fit="171">Experimental Packages In Use</span><Ico n="down" s="11" /></div>
        <div class="btn w30 se"><Ico n="search" s="15" /></div>
        <div class="btn lay">Layers<i class="grow" /><Ico n="down" s="10" /></div>
        <div class="btn lay l2">Layout<i class="grow" /><Ico n="down" s="10" /></div>
      </div>

      <div class="work">
        <div class="leftside">
          <div class="upper">
            <!-- hierarchy -->
            <section class="hier">
              <div class="tabs"><div class="tab on h1"><Ico n="list" s="12" /><span v-fit="54">Hierarchy</span></div><div class="tab"><Ico n="trio" s="14" /><span v-fit="98">Entities Hierarchy</span></div><i class="grow" /><Ico n="lock" s="11" /><Ico n="dots" s="13" class="mr" /></div>
              <div class="hsearch"><Ico n="plus" s="13" /><Ico n="down" s="9" /><div class="field"><Ico n="search" s="11" /><em>All</em></div><Ico n="expand" s="12" /></div>
              <div class="tree">
                <div v-for="r in tree" :key="r.t" class="node" :class="{ root: r.root, sel: r.sel, off: r.off, bold: r.b }">
                  <i class="gut" /><Ico v-if="r.root" :n="r.shut ? 'right' : 'down'" s="11" class="fold" /><Ico :n="r.i" s="14" /><span>{{ r.t }}</span><i class="grow" />
                  <Ico v-if="r.root" n="dots" s="12" class="mr" /><b v-if="r.sel" class="box" />
                </div>
                <div class="rest"><i class="gut" /></div>
              </div>
            </section>
            <!-- scene -->
            <section class="scene">
              <div class="tabs"><div class="tab on s1"><Ico n="grid" s="11" /><span v-fit="36">Scene</span></div><i class="grow" /><Ico n="dots" s="12" class="mr" /></div>
              <div class="stool">
                <i class="grip" />
                <div class="sb" style="width:65px"><Ico n="pivot" s="15" /><span v-fit="29">Pivot</span><Ico n="down" s="10" /></div>
                <div class="sb" style="width:67px"><Ico n="local" s="15" /><span v-fit="30">Local</span><Ico n="down" s="10" /></div>
                <i class="grip g2" />
                <div class="sb blue" style="width:37px"><Ico n="gridy" s="16" /><Ico n="down" s="10" /></div>
                <div class="sb faint" style="width:36px"><Ico n="snap" s="16" /><Ico n="down" s="10" /></div>
                <div class="sb" style="width:36px"><Ico n="ruler" s="16" /><Ico n="down" s="10" /></div>
                <i class="grow" /><i class="grip" />
                <div class="sb" style="width:36px"><Ico n="shade" s="15" /><Ico n="down" s="9" /></div>
                <div class="sb" style="width:32px"><b>2D</b></div>
                <div class="sb blue" style="width:32px"><Ico n="bulb" s="14" /></div>
                <div class="sb faint" style="width:32px"><Ico n="mute" s="13" /></div>
                <div class="sb blue" style="width:37px"><Ico n="fx" s="14" /><Ico n="down" s="9" /></div>
                <div class="sb blue" style="width:33px"><Ico n="eye" s="15" /></div>
                <div class="sb" style="width:36px"><Ico n="camera" s="13" /><Ico n="down" s="9" /></div>
                <div class="sb blue" style="width:37px"><Ico n="globe" s="16" /><Ico n="down" s="9" /></div>
              </div>
              <div class="view">
                <svg viewBox="517 118 986 188" width="986" height="188">
                  <defs>
                    <linearGradient id="sky" x1="0" x2="0" y1="118" y2="158" gradientUnits="userSpaceOnUse"><stop offset="0" stop-color="#eaffff" /><stop offset=".2" stop-color="#dcf4f6" /><stop offset=".55" stop-color="#aebbbc" /><stop offset="1" stop-color="#7b7a7b" /></linearGradient>
                    <linearGradient id="gr" x1="0" x2="0" y1="130" y2="306" gradientUnits="userSpaceOnUse"><stop offset="0" stop-color="#6c6767" /><stop offset=".35" stop-color="#67625d" /><stop offset="1" stop-color="#6a615d" /></linearGradient>
                    <linearGradient id="fade" x1="0" x2="0" y1="140" y2="240" gradientUnits="userSpaceOnUse"><stop offset="0" stop-color="#000" /><stop offset="1" stop-color="#fff" /></linearGradient>
                    <mask id="mk"><rect x="517" y="118" width="986" height="188" fill="url(#fade)" /></mask>
                    <filter id="soft"><feGaussianBlur stdDeviation="2.500" /></filter>
                  </defs>
                  <rect x="517" y="118" width="986" height="60" fill="url(#sky)" />
                  <path d="M490 154Q780 137 983 136T1530 154V330H490z" fill="url(#gr)" filter="url(#soft)" />
                  <rect x="517" y="180" width="986" height="126" fill="url(#gr)" />
                  <g stroke="#8a8682" fill="none" mask="url(#mk)" opacity=".6">
                    <path v-for="x in rays" :key="x" :d="`M983 127L${x} 306`" />
                    <path v-for="y in crosses" :key="y" :d="`M850 ${y}L3600 -8M850 ${y}L517 ${y + (y + 8) * 0.121}`" />
                  </g>
                </svg>
                <svg class="gizmo" viewBox="1410 108 90 110" width="90" height="110">
                  <path d="M1440 125.500h15l-6 22h-3z" fill="#93df5c" /><path d="M1442 147l4-8 4 8z" fill="#3f62d8" />
                  <path d="M1441 146h13v15l-7-3-6 5z" fill="#e6e6e6" /><path d="M1418 149l20 6-20 7z" fill="#cfcfcf" /><path d="M1475 147v11l-19-5z" fill="#e2564a" />
                  <ellipse cx="1452" cy="171" rx="10" ry="8" fill="#d6d6d6" /><path d="M1475 123h8v5h-8z" fill="#dbe3e3" />
                  <g font-family="Inter, sans-serif" font-size="12" fill="#e4e4e4" font-weight="600"><text x="1442" y="121">y</text><text x="1437" y="141">z</text><text x="1474" y="156">x</text><text x="1435" y="209" font-weight="400" fill="#d0d0d0" textLength="32">Persp</text></g>
                  <path d="M1432 201l-9 4 9 4M1423 205h9" fill="none" stroke="#c8c8c8" />
                </svg>
                <div class="strip"><i /><div v-for="(n, i) in ['hand', 'move', 'rotate', 'expand', 'rect', 'globe']" :key="n" :class="{ blue: i === 1 }"><Ico :n="n" s="16" /></div></div>
              </div>
            </section>
            <!-- game -->
            <section class="game">
              <div class="tabs"><div class="tab on g1"><Ico n="pad" s="13" /><span v-fit="32">Game</span></div><i class="grow" /><Ico n="dots" s="12" class="mr" /></div>
              <div class="gtool">
                <div style="width:90px">Game<i class="grow" /><Ico n="down" s="9" /></div>
                <div style="width:86px;padding-left:9px">Display 1<i class="grow" /><Ico n="down" s="9" /></div>
                <div style="width:160px"><span v-fit="122">4K UHD (3840x2160)</span><i class="grow" /><Ico n="down" s="9" /></div>
                <div style="width:388px;padding-left:7px"><span class="sc">Scale</span><s><u /></s><span>0.31x</span></div>
                <div style="width:110px"><span v-fit="76">Play Focused</span><i class="grow" /><Ico n="down" s="9" /></div>
                <div style="width:26px"><Ico n="bug" s="15" /></div><div style="width:147px" />
                <div style="width:26px"><Ico n="sound" s="13" /></div><div style="width:26px"><Ico n="keys" s="13" /></div>
                <div style="width:39px" class="dimt">Stats</div><div style="width:51px"><span v-fit="42">Gizmos</span></div><div style="width:18px"><Ico n="down" s="9" /></div>
              </div>
              <div class="gview"><div class="vbar" /><div class="hbar" /></div>
            </section>
          </div>

          <!-- profiler -->
          <section class="prof">
            <div class="tabs"><div class="tab on p1"><Ico n="watch" s="14" /><span v-fit="40">Profiler</span></div><div class="tab p2"><Ico n="doc" s="11" /><span v-fit="46">Console</span></div><div class="tab p3"><Ico n="folder" s="12" /><span v-fit="40">Project</span></div><i class="grow" /><Ico n="dots" s="12" class="mr" /></div>
            <div class="ptool">
              <div style="width:180px"><span v-fit="91">Profiler Modules</span><i class="grow" /><Ico n="down" s="9" /></div>
              <div style="width:79px"><span v-fit="60">Play Mode</span><Ico n="down" s="9" /></div>
              <div style="width:26px" class="rec"><Ico n="record" s="15" /></div>
              <div style="width:26px" class="c"><Ico n="prev" s="13" /></div><div style="width:26px" class="c"><Ico n="next" s="13" /></div><div style="width:26px" class="c"><Ico n="last" s="15" /></div>
              <div style="width:107px" class="f"><span v-fit="94">Frame: 149 / 322</span></div><div style="width:40px"><span v-fit="30">Clear</span></div>
              <div style="width:536px"><i class="grow" /><span v-fit="73">Clear on Play</span></div><div style="width:80px"><span v-fit="69">Deep Profile</span></div><div style="width:90px"><span v-fit="64">Call Stacks</span><i class="grow" /><Ico n="down" s="9" /></div>
              <i class="grow" /><div class="bl" style="width:25px"><Ico n="folderup" s="14" /></div><div style="width:26px"><Ico n="save" s="13" /></div><div style="width:26px"><Ico n="help" s="12" /></div><div style="width:26px" class="nb"><Ico n="dots" s="12" /></div>
            </div>
            <div class="pbody">
              <aside>
                <div v-for="m in modules" :key="m.name" class="mod" :class="{ act: m.on }" :style="{ height: m.h + 'px' }">
                  <div class="mh"><Ico :n="m.icon" s="15" /><span>{{ m.name }}</span><i class="grow" /><Ico v-if="m.warn" n="warn" s="13" /></div>
                  <div v-for="(t, i) in m.items" :key="t" class="li"><b :style="{ background: C[i] }" /><span>{{ t }}</span><i class="grow" /><u v-if="m.drag" /></div>
                </div>
              </aside>
              <Chart :d="charts.main" :labels="true" />
              <div class="scroll"><Ico n="up" s="9" /><i style="height:640px" /></div>
            </div>
            <div class="ttool"><div style="width:180px">Timeline<i class="grow" /><Ico n="down" s="9" /></div><div style="width:35px">Live</div><span class="cg" v-fit="79">CPU:54.37ms</span><span class="gg" v-fit="77">GPU:52.93ms</span></div>
            <div class="tbody">
              <aside class="threads"><div class="t1">Main Thread</div><div class="t2">Render Thread</div><div class="t3"><Ico n="right" s="10" />Job</div></aside>
              <div class="tl">
                <svg viewBox="180 1159 2477 200" width="2477" height="200" class="tlsvg">
                  <rect x="180" y="1159" width="2477" height="200" fill="#202020" /><rect x="180" y="1159" width="2477" height="15.500" fill="#2a2a2a" /><rect x="541" y="1159" width="1756" height="15.500" fill="#343434" />
                  <g v-for="t in ticks" :key="t.x"><path v-if="t.mid" :d="`M${t.x} 1176V1356`" stroke="#fff" :stroke-opacity="t.big ? .16 : .09" /><path :d="`M${t.x} ${t.big ? 1166 : t.mid ? 1170 : 1172}V1174`" stroke="#aaa" stroke-opacity=".7" /></g>
                  <text v-for="l in msLabels" :key="l.t" :x="l.x + 3" y="1171" font-size="11" fill="#999">{{ l.t }}</text>
                  <path d="M180 1175H2657" stroke="#111" stroke-width="1.500" />
                  <g v-for="(b, i) in blocks" :key="'b' + i"><rect :x="b[0]" :y="1176 + b[2] * 16" :width="b[1] - b[0] - .4" height="15.200" :fill="b[3]" /></g>
                  <rect v-for="(b, i) in partial" :key="'p' + i" :x="b[0]" y="1272" :width="b[1] - b[0]" height="4.600" :fill="b[2]" />
                  <rect v-for="(b, i) in rblocks" :key="'r' + i" :x="b[0]" :y="1279 + b[2] * 16" :width="b[1] - b[0]" height="15.200" :fill="b[3]" />
                  <path d="M328 1328.500h4M2355 1328.500h13" stroke="#317390" stroke-width="3" />
                  <g font-size="12" text-anchor="middle" fill="#c4c4c4">
                    <template v-for="(b, i) in blocks" :key="'bt' + i"><text v-if="b[4]" :x="(b[0] + b[1]) / 2" :y="1188 + b[2] * 16" :textLength="b[1] - b[0] < 120 ? Math.min(b[1] - b[0] - 3, b[4].length * 6) : null" lengthAdjust="spacingAndGlyphs">{{ b[4] }}</text></template>
                    <template v-for="(b, i) in rblocks" :key="'rt' + i"><text v-if="b[4]" :x="(b[0] + b[1]) / 2" :y="1291 + b[2] * 16" :opacity="b[0] > 2300 ? 1 : .5" :textLength="b[1] - b[0] < 60 ? 30 : 162" lengthAdjust="spacingAndGlyphs">{{ b[4] }}</text></template>
                  </g>
                  <g v-for="j in jobs" :key="j.y"><path :d="`M180 ${j.y}H2657`" stroke="#505050" stroke-width="1" /><path v-for="(g, i) in j.g" :key="i" :d="`M${g[0]} ${j.y}H${g[1]}`" :stroke="G" stroke-width="1" /></g>
                  <path d="M612.500 1332v21M2184.500 1332v21" stroke="#2aa58a" stroke-width="2" stroke-dasharray="1.500 1" />
                  <path d="M180 1277.500H2657M180 1331.300H2657M180 1353.800H2657" stroke="#0b0b0b" stroke-width="1.400" />
                  <rect x="180" y="1159" width="361" height="197" fill="#202020" opacity=".55" /><rect x="2297" y="1159" width="360" height="118" fill="#202020" opacity=".55" /><rect x="2297" y="1332" width="360" height="22" fill="#202020" opacity=".5" />
                  <path d="M541.500 1159V1356M2297.500 1159V1356" stroke="#9a9a9a" stroke-opacity=".8" />
                  <g fill="#0c0c0c"><rect x="1410.500" y="1264" width="17" height="12.500" rx="2" /><rect x="1410.500" y="1318" width="17" height="12.500" rx="2" /></g>
                  <path d="M1415 1268h7.500l-3.700 5zM1415 1322h7.500l-3.700 5z" fill="#b0b0b0" />
                </svg>
                <div class="hscroll"><Ico n="left" s="9" /><i /><Ico n="right" s="9" /></div>
              </div>
              <div class="scroll tls"><Ico n="up" s="9" /><i style="height:67px" /><i class="grow tr" /><Ico n="down" s="9" /></div>
            </div>
          </section>
        </div>

        <!-- inspector -->
        <section class="insp">
          <div class="tabs"><div class="tab on i1"><Ico n="info" s="11" /><span v-fit="52">Inspector</span></div><i class="grow" /><Ico n="orange" s="13" /><Ico n="lock" s="11" /><Ico n="dots" s="12" class="mr" /></div>
          <div class="ihead">
            <Ico n="cube" s="22" class="big" />
            <div class="icol">
              <div class="irow"><b class="ck"><Ico n="check" s="12" /></b><div class="inp name"><span v-fit="156">PointCloudEntitySubscene</span></div><b class="ck" /><span class="st">Static</span><Ico n="down" s="9" /></div>
              <div class="irow"><span class="lb tg">Tag</span><div class="dd d1">Untagged<i class="grow" /><Ico n="down" s="9" /></div><span class="lb ly">Layer</span><div class="dd d2">Default<i class="grow" /><Ico n="down" s="9" /></div></div>
            </div>
          </div>
          <div class="chead"><Ico n="down" s="10" class="fo" /><Ico n="axes" s="14" /><b class="nm">Transform</b><i class="grow" /><Ico n="help" s="12" /><Ico n="sliders" s="12" /><Ico n="dots" s="12" /></div>
          <div class="props xf">
            <div v-for="r in xyz" :key="r[0]" class="pr mk"><span class="pl">{{ r[0] }}</span><Ico v-if="r[1] === '1'" n="unlink" s="13" class="ul" /><template v-for="a in ['X', 'Y', 'Z']" :key="a"><span class="ax">{{ a }}</span><div class="inp num">{{ r[1] }}</div></template></div>
          </div>
          <div class="chead mk"><Ico n="down" s="10" class="fo" /><Ico n="script" s="13" /><b class="ck c2"><Ico n="check" s="12" /></b><b class="nm2">Sub Scene (Script)</b><i class="grow" /><Ico n="help" s="12" /><Ico n="sliders" s="12" /><Ico n="dots" s="12" /></div>
          <div class="props sc2">
            <div class="pr mk offp"><span class="pl">Script</span><div class="inp obj"><Ico n="script" s="10" />SubScene<i class="grow" /><Ico n="target" s="12" /></div></div>
            <div class="pr mk"><span class="pl">Scene Asset</span><div class="inp obj"><Ico n="unity" s="11" /><span v-fit="156">PointCloudEntitySubscene</span><i class="grow" /><Ico n="target" s="12" /></div></div>
            <div class="pr mk"><span class="pl">Hierarchy Color</span><div class="inp colr"><i /><Ico n="picker" s="13" /></div></div>
            <div class="pr mk"><span class="pl">Auto Load Scene</span><b class="ck"><Ico n="check" s="12" /></b></div>
            <div class="pr gap"><span class="pl">Closed SubScenes</span><i class="grow" /><span v-fit="143">1 / 1 loaded, 1 / 1 imported</span></div>
            <div class="pr reg"><span class="pl">PointCloudEntitySubscene</span><div class="ib">Reimport</div><div class="ib">Unload</div><div class="ib">Open</div></div>
          </div>
          <div class="addw"><div class="ib add">Add Component</div></div>
        </section>
      </div>
      <div class="status"><Ico n="bugoff" s="14" /><Ico n="db" s="14" /><Ico n="timeoff" s="14" /><Ico n="okc" s="15" /></div>
      <footer class="task">
        <div class="wx"><Ico n="weather" s="25" t="22" /><div>62°F<br>Cloudy</div></div>
        <div class="apps"><Ico n="win" s="23" /><div class="pill"><Ico n="search" s="16" /><span v-fit="37">Search</span></div>
          <div v-for="t in tasks" :key="t[0]" class="app" :class="{ act: t[1] === 2 }"><Ico :n="t[0]" s="24" /><i v-if="t[1]" :class="{ wide: t[1] === 2 }" /></div></div>
        <div class="tray"><Ico n="caret" s="14" /><Ico n="wifi" s="18" /><Ico n="vol" s="18" /><Ico n="batt" s="18" /><div>6:24 PM<br>2/24/2023</div></div>
      </footer>
      <svg class="heads" viewBox="0 0 3440 1440" width="3440" height="1440">
        <text x="739" y="350" textLength="277" lengthAdjust="spacingAndGlyphs">PARTICLES</text><text x="2075" y="351" textLength="95" lengthAdjust="spacingAndGlyphs">ECS</text>
        <text x="403" y="592" textLength="153" lengthAdjust="spacingAndGlyphs">sprite</text><text x="1081" y="610" textLength="153" lengthAdjust="spacingAndGlyphs">cubes</text>
        <text x="1686" y="608" textLength="153" lengthAdjust="spacingAndGlyphs">cubes</text><text x="2317" y="584" textLength="180" lengthAdjust="spacingAndGlyphs">sprites</text>
      </svg>
    </div>

    <!-- frame debugger statistics -->
    <div v-for="d in debug" :key="d.k" class="dbg" :class="d.k">
      <div class="dh" :style="{ height: d.cut + 'px' }"><span>Open Frame Debugger</span></div>
      <div class="dl first"><span class="c144">SetPass Calls: {{ d.calls }}</span><span :class="d.wide ? 'c192' : 'c144'">Draw Calls: {{ d.draw }}</span><span :class="d.wide ? 'c144' : 'c96'">Batches: {{ d.bat }}</span><span class="c96">Triangles: {{ d.tri }}</span><span class="c96">Vertices: {{ d.ver }}</span></div>
      <div v-for="(n, i) in ['(Dynamic Batching)', '(Static Batching)', '(Instancing)']" :key="n" class="dl"><span class="c144">{{ n }}</span><span class="c144">Batched Draw Calls: 0</span><span class="c96">Batches: 0</span><span class="c96">Triangles: 0</span><span class="c96">Vertices: 0</span><span v-if="!i">Time: 0.00ms</span></div>
      <div class="dl">Used Textures: 14 / 128.3 KB</div><div class="dl">Render Textures: {{ d.tex }} / 1.51 GB</div><div class="dl">Render Textures Changes: 16</div><div class="dl">Used Buffers: {{ d.buf }}</div>
      <div class="dl">Vertex Buffer Upload In Frame: 0 / 0 B</div><div class="dl">Index Buffer Upload In Frame: 0 / 0 B</div><div class="dl">Shadow Casters: {{ d.sh }}</div>
      <svg class="heads" viewBox="0 0 760 224" width="760" height="224"><text :x="d.tx" :y="d.ty" :textLength="d.tw" lengthAdjust="spacingAndGlyphs">{{ d.tag }}</text></svg>
    </div>

    <!-- second capture of the profiler -->
    <div class="side">
      <div class="tabs sidetabs"><i class="grow" /><Ico n="dots" s="12" /></div>
      <div class="ptool"><div style="width:28px;padding:0 3px 0 1px">s<i class="grow" /><Ico n="down" s="9" /></div><i class="grow" /><div class="bl" style="width:26px"><Ico n="folderup" s="14" /></div><div style="width:26px"><Ico n="save" s="13" /></div><div style="width:26px"><Ico n="help" s="12" /></div><div style="width:21px" class="nb"><Ico n="dots" s="12" /></div></div>
      <div class="pbody sb2"><Chart :d="charts.side" :labels="false" /><div class="scroll"><Ico n="up" s="9" /><i style="height:460px" /></div></div>
      <svg class="heads" viewBox="3614 666 1478 801" width="1478" height="801">
        <text x="4304" y="800" textLength="281" lengthAdjust="spacingAndGlyphs">PARTICLES</text><text x="3924" y="940" textLength="185" lengthAdjust="spacingAndGlyphs">Sprites</text><text x="4718" y="948" textLength="162" lengthAdjust="spacingAndGlyphs">Cubes</text>
      </svg>
    </div>

    <!-- frame budget note -->
    <div class="budget">
      <p class="bt" v-fit="1184">Budget: 1000 ms / target frames per second</p>
      <p class="bi"><i /><span v-fit="364">60 fps: <b>16 ms</b></span></p>
      <p class="bi"><i /><span v-fit="363">30 fps: 32 ms</span></p>
      <p class="bi"><i /><span v-fit="496">90 fps (VR): 11 ms</span></p>
    </div>
  </div></div>
</template>

<style>
html, body { margin: 0; background: #fff; }
</style>

<style scoped>
* { box-sizing: border-box; }
.page { width: 4096px; height: 1186px; overflow: hidden; background: #fff; }
.board { width: 5124px; height: 1484px; position: relative; transform: scale(.79938); transform-origin: 0 0; font: 12px/16px Inter, sans-serif; color: #adadad; white-space: nowrap; }
i, em { font-style: normal; }
.grow { flex: 1 1 0; }
.desktop { position: absolute; left: 0; top: 0; width: 3440px; height: 1440px; display: flex; flex-direction: column; background: #141414; }
.title, .menu { font-family: "Open Sans", "Noto Sans", sans-serif; color: #111; }
.title { height: 23px; flex: none; background: #eff2fb; display: flex; align-items: center; padding: 0 16px 0 3px; gap: 6px; }
.title > svg:nth-last-child(-n+3) { margin-left: 25px; }
.menu { height: 20px; flex: none; background: #fff; border-bottom: 2px solid #eceeed; display: flex; align-items: center; padding-left: 7px; }
.mi { display: block; }
.topbar { height: 30px; flex: none; background: #141414; display: flex; align-items: center; padding: 0 10px 0 8px; }
.btn { height: 18px; background: #303030; display: flex; align-items: center; justify-content: center; color: #b4b4b4; }
.as { width: 58px; gap: 6px; margin-right: 6px; color: #a4a4a4; }
.w30 { width: 30px; margin-right: 5px; }
.dim { background: #222; color: #6f6f6f; height: 20px; }
.play { display: flex; gap: 1px; margin-left: 1531px; margin-right: 1219px; }
.play .btn { width: 31px; color: #d0d0d0; }
.play .on { background: #204265; }
.exp { width: 205px; height: 20px; border: 1px solid #bd9020; border-radius: 3px; background: #0a0a0a; color: #c8980e; display: flex; align-items: center; justify-content: space-between; padding: 0 8px 0 6px; margin: 0 5px 0 1px; }
.lay { width: 78px; padding: 0 3px; margin-right: 5px; color: #949494; }
.l2 { width: 79px; margin-right: 0; margin-left: 0; }
.work { height: 1297px; flex: none; display: flex; }
.leftside { width: 2672px; flex: none; display: flex; flex-direction: column; }
.upper { height: 235px; display: flex; gap: 2px; padding-bottom: 2px; flex: none; }
.tabs { height: 19px; flex: none; background: #202020; display: flex; align-items: center; gap: 6px; }
.tab { height: 19px; display: flex; align-items: center; gap: 4px; padding: 0 8px 0 7px; }
.tab.on { background: #303030; border-radius: 3px 3px 0 0; }
.tab span { padding-top: 1px; }
.mr { margin-right: 6px; }
.h1 { width: 95px; } .s1 { width: 77px; } .g1 { width: 74px; } .i1 { width: 94px; } .p1 { width: 81px; gap: 3px; padding-left: 5px; } .p2 { width: 80px; } .p3 { width: 70px; }
.hier { width: 515px; display: flex; flex-direction: column; background: #2c2c2c; }
.hsearch { height: 20px; flex: none; display: flex; align-items: center; background: #303030; border-bottom: 1px solid #1d1d1d; padding: 0 5px 0 6px; gap: 3px; }
.field { margin-left: 150px; flex: 1; height: 15px; background: #222; border: 1px solid #161616; border-radius: 3px; display: flex; align-items: center; padding-left: 4px; gap: 3px; }
.field em { color: #666; }
.tree { flex: 1; display: flex; flex-direction: column; padding-top: 1px; }
.node { height: 16px; display: flex; align-items: center; padding-left: 60px; gap: 4px; position: relative; }
.node > .gut { position: absolute; left: 0; top: 0; width: 32px; height: 16px; background: #272727; }
.node.sel > .gut { background: #373737; }
.node.root { padding-left: 33px; background: #242424; border-bottom: 1px solid #303030; }
.node.root span { margin-left: -1px; }
.node.root > .gut { background: none; }
.bold { font-weight: 600; }
.sel { background: #3e3e3e; }
.off { color: #666; }
.fold { color: #555; }
.box { width: 14px; height: 13px; background: #222; border: 1px solid #161616; border-radius: 2px; margin-right: 2px; }
.rest { flex: 1; display: flex; } .rest .gut { width: 32px; background: #272727; }
.scene { width: 986px; display: flex; flex-direction: column; }
.stool { height: 26px; flex: none; background: #303030; display: flex; align-items: center; gap: 4px; padding: 0 4px 0 6px; border-bottom: 1px solid #222; }
.grip { width: 4px; height: 15px; border: solid #484848; border-width: 0 1px; margin-right: 3px; } .g2 { margin-left: 12px; }
.sb { height: 20px; background: #464646; border-radius: 2px; display: flex; align-items: center; justify-content: center; gap: 3px; color: #b5b5b5; }
.sb b { font-size: 12px; }
.blue { background: #34496a !important; color: #d5d5d5; }
.faint { background: #393939; color: #777; }
.view { flex: 1; position: relative; }
.view > svg { display: block; }
.view > .gizmo { position: absolute; left: 893px; top: -10px; }
.strip { position: absolute; left: 2px; top: 2px; width: 38px; height: 147px; background: #191919; border-radius: 3px; padding: 6px 3px 3px; display: flex; flex-direction: column; gap: 1px; }
.strip > i { height: 5px; width: 16px; margin: 0 auto 6px; border: solid #444; border-width: 1px 0; }
.strip > div { height: 20px; background: #484848; display: flex; align-items: center; justify-content: center; color: #ccc; }
.game { width: 1167px; display: flex; flex-direction: column; }
.gtool { height: 21px; flex: none; background: #303030; display: flex; border-bottom: 1px solid #1a1a1a; }
.gtool > div, .ptool > div { display: flex; align-items: center; padding: 0 4px; border-right: 1px solid #202020; }
.gtool > div > svg:only-child { margin: auto; }
.gtool s { width: 150px; height: 2px; background: #555; margin: 0 6px; display: block; position: relative; }
.gtool u { position: absolute; left: 45px; top: -4px; width: 10px; height: 10px; border-radius: 5px; background: #999; }
.sc { width: 32px; } .dimt { color: #7d7d7d; }
.gview { flex: 1; background: linear-gradient(172deg, #6e6868, #67625d 35%, #66625a 75%, #69625b); display: flex; flex-direction: column; align-items: flex-end; justify-content: space-between; padding: 58px 3px 3px 33px; }
.vbar { width: 5px; height: 63px; background: #585653; border-radius: 3px; }
.hbar { width: 1117px; height: 4px; background: #555452; margin-right: 14px; border-radius: 2px; }
.prof { flex: 1; display: flex; flex-direction: column; background: #2d2d2d; min-height: 0; }
.ptool { height: 20px; flex: none; background: #303030; display: flex; border-bottom: 1px solid #1d1d1d; }
.ptool > div { padding: 0 3px 0 4px; gap: 3px; }
.ptool .rec { background: #464646; justify-content: center; padding: 0; }
.ptool .c { justify-content: center; padding: 0; } .ptool .f { padding-left: 2px; }
.ptool .bl { border-left: 1px solid #202020; }
.ptool .nb { border: 0; } .ptool > div > svg:only-child { margin: auto; }
.pbody { height: 791px; flex: none; display: flex; overflow: hidden; }
aside { width: 180px; flex: none; background: #2d2d2d; border-right: 1px solid #1c1c1c; overflow: hidden; }
.mod { border-bottom: 1px solid #1a1a1a; padding: 5px 4px 0 5px; overflow: hidden; }
.act { background: #353535; padding-top: 6px; }
.mh { height: 22px; padding-bottom: 6px; display: flex; align-items: center; gap: 5px; font-size: 14px; line-height: 16px; }
.li { height: 16px; display: flex; align-items: center; gap: 5px; }
.li b { width: 7px; height: 7px; outline: 1px solid #222; }
.li u { width: 14px; height: 4px; border: solid #555; border-width: 1px 0; }
.scroll { width: 15px; flex: none; background: #242424; display: flex; flex-direction: column; align-items: center; padding-top: 4px; gap: 4px; }
.scroll > i:not(.tr) { width: 9px; background: #585858; border-radius: 5px; }
.ttool { height: 21px; flex: none; background: #303030; border-top: 1px solid #484848; border-bottom: 1px solid #1a1a1a; display: flex; align-items: center; }
.ttool > div { display: flex; align-items: center; height: 100%; padding: 0 4px; border-right: 1px solid #202020; }
.cg { margin-left: 1133px; } .gg { margin-left: 8px; }
.tbody { flex: 1; display: flex; min-height: 0; }
.tl { display: flex; flex-direction: column; width: 2477px; }
.tlsvg { display: block; font-family: Inter, sans-serif; }
.hscroll { height: 11px; background: #242424; display: flex; align-items: center; padding: 0 3px 0 5px; gap: 2px; }
.hscroll i { flex: 1; height: 10px; background: #555; border-radius: 5px; }
.tls { padding: 20px 0 16px; }
.threads > div { border-bottom: 1px solid #1a1a1a; padding-left: 18px; }
.t1 { height: 118px; padding-top: 18px; } .t2 { height: 54px; padding-top: 3px; } .t3 { height: 23px; padding-top: 3px; display: flex; align-items: center; gap: 3px; }
.threads > .t3 { padding-left: 5px; }
.t3 svg { color: #666; }
.insp { width: 766px; margin-left: 2px; background: #2d2d2d; display: flex; flex-direction: column; }
.insp .tabs { gap: 5px; } .insp .mr { margin-right: 8px; }
.ihead { height: 64px; flex: none; background: #303030; border-bottom: 1px solid #161616; display: flex; padding: 8px 5px 0 6px; gap: 14px; }
.big { margin-top: 3px; }
.icol { flex: 1; }
.irow { display: flex; align-items: center; height: 25px; }
.irow:first-child { height: 20px; }
.irow > .ck:first-child { margin: 0 7px 0 5px; }
.ck { width: 13px; height: 14px; background: #222; border: 1px solid #151515; border-radius: 2px; display: flex; align-items: center; justify-content: center; color: #ddd; }
.inp { height: 18px; background: #222; border: 1px solid #151515; border-radius: 2px; display: flex; align-items: center; padding: 0 3px; color: #b5b5b5; }
.name { width: 619px; margin-right: 3px; }
.st { color: #8a8a8a; margin: 0 12px 0 4px; }
.lb { color: #999; } .tg { width: 26px; } .ly { width: 36px; margin-left: 13px; }
.dd { height: 16px; background: #424242; border-radius: 2px; display: flex; align-items: center; padding: 0 4px; border-bottom: 1px solid #1f1f1f; }
.icol .irow:last-child { margin-top: 1px; }
.d1 { width: 327px; } .d2 { flex: 1; }
.chead { height: 21px; margin-top: 2px; flex: none; background: #303030; border-top: 1px solid #191919; border-bottom: 1px solid #262626; display: flex; align-items: center; padding: 0 7px 0 5px; gap: 5px; }
.chead .grow ~ svg { margin-left: 3px; }
.fo { color: #666; } .nm { margin-left: 21px; font-weight: 600; } .nm2 { margin-left: 2px; font-weight: 600; } .c2 { margin-left: 2px; }
.props { font-weight: 500; padding-right: 5px; flex: none; }
.xf { height: 70px; padding-top: 3px; } .sc2 { height: 149px; padding-top: 4px; border-bottom: 1px solid #161616; }
.pr { height: 20px; display: flex; align-items: center; padding-left: 19px; position: relative; }
.mk { box-shadow: inset 2px 0 #cf9040; }
.pl { width: 307px; flex: none; }
.ul { margin-left: -24px; margin-right: 11px; }
.ax { width: 15px; font-weight: 500; } .num { width: 126px; margin-right: 6px; font-weight: 400; } .num:last-child { margin: 0; }
.obj, .colr { flex: 1; gap: 2px; }
.offp { color: #707070; } .offp .inp { background: #292929; color: #707070; opacity: .8; font-weight: 400; }
.obj { font-weight: 500; }
.colr { padding: 0 2px 0 0; } .colr i { flex: 1; height: 16px; background: #808080; border-bottom: 3px solid #fff; }
.gap { margin-top: 17px; } .gap > span:last-child { font-weight: 400; }
.reg { font-weight: 400; gap: 4px; } .reg .pl { width: 303px; }
.ib { height: 17px; flex: 1; background: #464646; border: 1px solid #222; border-radius: 2px; text-align: center; line-height: 15px; }
.addw { display: flex; justify-content: center; padding-top: 9px; } .add { flex: none; width: 229px; height: 23px; line-height: 21px; }
.status { height: 22px; flex: none; background: #141414; display: flex; justify-content: flex-end; align-items: center; gap: 12px; padding-right: 7px; color: #a8a8a8; }
.task { height: 48px; flex: none; border-top: 1px solid #3b4050; color: #fff; font-family: "Open Sans", "Noto Sans", sans-serif; display: flex; align-items: center; justify-content: space-between; background: linear-gradient(90deg, #1d222b 0, #1b2230 470px, #12254c 510px, #0f1d66 830px, #0f1e66 960px, #14283f 1020px, #14283f 1060px, #101e66 1150px, #132a52 1270px, #101d6c 1400px, #11206a 1600px, #1b1b4a 1690px, #211f2b 1740px, #1f1e28 2040px, #17204a 2120px, #1d1c4a 2260px, #10235a 2390px, #12244e 2590px, #221f2b 2640px, #13234a 2800px, #1f2029 2900px, #1c2129 100%); }
.wx { display: flex; align-items: center; gap: 7px; width: 300px; padding-left: 18px; }
.apps { position: absolute; left: 1458px; display: flex; align-items: center; }
.pill { width: 99px; height: 32px; border-radius: 16px; background: #1f2e62; margin: 0 4px 0 15px; display: flex; align-items: center; justify-content: center; gap: 6px; }
.app { width: 40px; height: 40px; margin-right: 4px; display: flex; align-items: center; justify-content: center; position: relative; }
.task .app.act { background: #2f2e3a; border-radius: 4px; padding-top: 0; }
.app i { position: absolute; bottom: 0; width: 6px; height: 3px; border-radius: 2px; background: #999; } .app .wide { width: 16px; background: #4cb8f0; }
.tray { display: flex; align-items: center; gap: 8px; padding-right: 19px; } .tray div { text-align: right; margin-left: 6px; letter-spacing: -.5px; }
.heads { position: absolute; left: 0; top: 0; font: 700 57.500px Lato, "Open Sans", sans-serif; fill: #fff; pointer-events: none; }
.dbg { position: absolute; background: #292929; overflow: hidden; color: #a2a2a2; }
.dbg.a { left: 3546px; top: 34px; width: 682px; height: 223px; } .dbg.b { left: 4252px; top: 44px; width: 714px; height: 203px; }
.dbg.c { left: 3548px; top: 266px; width: 692px; height: 223px; border-top: 2px solid #1e1e1e; } .dbg.d { left: 4254px; top: 264px; width: 750px; height: 219px; }
.dh { background: #303030; border-bottom: 1px solid #1b1b1b; display: flex; align-items: flex-end; overflow: hidden; }
.dh span { width: 137px; padding: 0 0 1px 6px; border-right: 1px solid #1d1d1d; line-height: 16px; }
.first { margin-top: 4px; }
.dl { height: 15px; line-height: 15px; padding-left: 6px; display: flex; }
.c144 { width: 144px; } .c192 { width: 192px; } .c96 { width: 96px; }
.side { position: absolute; left: 3614px; top: 666px; width: 1478px; height: 801px; overflow: hidden; background: #242424; }
.sidetabs { height: 16px; padding-right: 2px; }
.sb2 { height: 765px; } .sb2 .scroll { width: 9px; }
.budget { position: absolute; left: 2318px; top: 760px; width: 1241px; height: 403px; background: linear-gradient(#fff 0, #fefefe 34%, #ececec 68%, #d8d8d8); font: 400 60.500px/82.600px Roboto, sans-serif; color: #303030; }
.budget p { margin: 0; } .bt { width: max-content; margin-left: 37px !important; height: 130px; padding-top: 12px; }
.bi { display: flex; align-items: center; height: 82.600px; padding-left: 57px; } .bi i { width: 41px; height: 7px; background: #555; margin-right: 68px; } .bi b { color: #111; }
</style>
